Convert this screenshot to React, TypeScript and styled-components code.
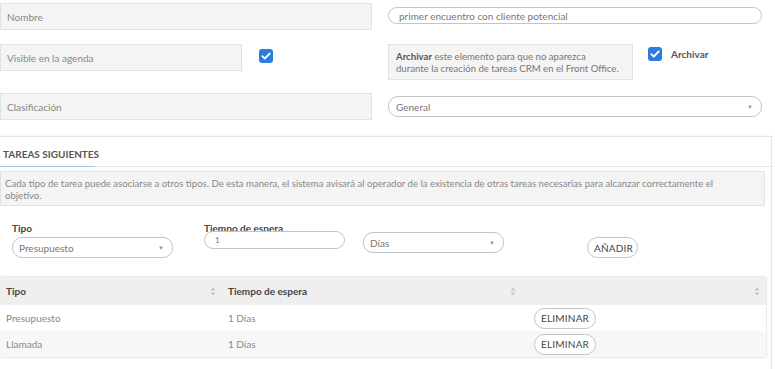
import styled, { createGlobalStyle } from "styled-components";

const GlobalStyle = createGlobalStyle`
    body {
        margin: 0;
        background: #ffffff;
        font-family: Lato, "Open Sans", sans-serif;
        color: #777777;
        font-size: 10px;
    }
    * { box-sizing: border-box; }
`

const Page = styled.div`
    width: 775px;
    height: 369px;
    overflow: hidden;
    padding-top: 3px;
`

const FormGrid = styled.div`
    display: grid;
    grid-template-columns: 372px 374px;
    column-gap: 16px;
`

const Cell = styled.div<{ $h: number }>`
    height: ${p => p.$h}px;
    display: flex;
    align-items: flex-start;
`

const LabelBox = styled.div<{ $w?: number }>`
    width: ${p => p.$w ? `${p.$w}px` : "100%"};
    height: 27px;
    background: #f4f4f4;
    border: 1px solid #e2e2e2;
    padding-left: 6px;
    display: flex;
    align-items: center;
    font-size: 10px;
    color: #888;
`

const Pill = styled.div<{ $w?: number; $h?: number; $mt?: number; $pl?: number; $fs?: number }>`
    width: ${p => p.$w ? `${p.$w}px` : "100%"};
    height: ${p => p.$h ?? 17}px;
    margin-top: ${p => p.$mt ?? 0}px;
    border: 1px solid #c4c4c4;
    border-radius: 10px;
    padding: 0 8px 0 ${p => p.$pl ?? 10}px;
    display: flex;
    align-items: center;
    justify-content: space-between;
    font-size: ${p => p.$fs ?? 10}px;
    color: #777;
    background: #fff;
`

const Caret = styled.span`
    font-size: 6px;
    color: #999;
`

const Check = styled.span<{ $ml: number; $mt: number }>`
    width: 14px;
    height: 14px;
    margin-left: ${p => p.$ml}px;
    margin-top: ${p => p.$mt}px;
    border-radius: 3px;
    background: #2b7de0;
    display: inline-flex;
    align-items: center;
    justify-content: center;
    flex-shrink: 0;
`

const InfoBox = styled.div`
    width: 245px;
    height: 36px;
    background: #f4f4f4;
    border: 1px solid #e2e2e2;
    padding: 0 6px 4px 7px;
    font-size: 9.6px;
    line-height: 12px;
    color: #777;
    display: flex;
    align-items: flex-end;
    b { color: #555; }
`

const CheckLabel = styled.span`
    font-weight: 700;
    color: #555;
    margin-left: 9px;
    margin-top: 4px;
    font-size: 10px;
`

const Panel = styled.div`
    margin-top: 16px;
    width: 772px;
    height: 240px;
    border-top: 1px solid #e4e4e4;
    border-right: 1px solid #e4e4e4;
    box-shadow: 0 -1px 2px rgba(0,0,0,0.04);
`

const PanelHead = styled.div`
    height: 30px;
    border-bottom: 1px solid #e4e4e4;
    display: flex;
    align-items: flex-end;
`

const PanelTitle = styled.div`
    font-weight: 700;
    color: #555;
    font-size: 10px;
    white-space: nowrap;
    padding: 0 3px 6px 3px;
    width: 95px;
    border-bottom: 1px solid #9fc9ee;
    margin-bottom: -1px;
`

const Desc = styled.div`
    margin-top: 4px;
    width: 765px;
    height: 35px;
    background: #f4f4f4;
    border: 1px solid #e2e2e2;
    padding: 6px 4px;
    font-size: 9.6px;
    line-height: 12px;
    color: #888;
`

const AddRow = styled.div`
    display: flex;
    align-items: flex-start;
    height: 71px;
    padding-top: 17px;
`

const Field = styled.div<{ $w: number; $ml: number }>`
    width: ${p => p.$w}px;
    margin-left: ${p => p.$ml}px;
    display: flex;
    flex-direction: column;
`

const FieldLabel = styled.div<{ $mb: number }>`
    font-weight: 700;
    color: #444;
    font-size: 10px;
    line-height: 10px;
    margin-bottom: ${p => p.$mb}px;
`

const Button = styled.button<{ $mt?: number }>`
    font-family: Lato, "Open Sans", sans-serif;
    font-size: 10px;
    color: #444;
    background: #fff;
    border: 1px solid #c4c4c4;
    border-radius: 11px;
    padding: 0 6px;
    height: 21px;
    margin-top: ${p => p.$mt ?? 0}px;
    letter-spacing: 0.2px;
`

const Table = styled.div`
    width: 766px;
    box-shadow: 0 0 2px rgba(0,0,0,0.25);
`

const Row = styled.div<{ $bg: string; $h: number; $bold?: boolean }>`
    display: grid;
    grid-template-columns: 222px 300px 244px;
    height: ${p => p.$h}px;
    background: ${p => p.$bg};
    align-items: center;
    color: ${p => p.$bold ? "#444" : "#888"};
    font-weight: ${p => p.$bold ? 700 : 400};
    font-size: 10px;
`

const Col = styled.div<{ $pl: number }>`
    display: flex;
    align-items: center;
    justify-content: space-between;
    padding-left: ${p => p.$pl}px;
    padding-right: 6px;
`

const SortIcon = () => (
    <svg width="6" height="9" viewBox="0 0 6 9">
        <path d="M3 0.5 L5.5 3.5 H0.5 Z" fill="#c4c4c4" />
        <path d="M3 8.5 L5.5 5.5 H0.5 Z" fill="#c4c4c4" />
    </svg>
)

const CheckMark = () => (
    <svg width="10" height="8" viewBox="0 0 10 8">
        <path d="M1.3 4.2 L3.8 6.5 L8.7 1.5" stroke="#fff" strokeWidth="1.8" fill="none" strokeLinecap="round" strokeLinejoin="round" />
    </svg>
)

const tasks = [
    { tipo: "Presupuesto", tiempo: "1 Días", bg: "#ffffff" },
    { tipo: "Llamada", tiempo: "1 Días", bg: "#f7f7f7" },
];

const App = () => {
    return (
        <>
            <GlobalStyle />
            <Page>
                <FormGrid>
                    <Cell $h={41}><LabelBox>Nombre</LabelBox></Cell>
                    <Cell $h={41}>
                        <Pill $mt={4}>primer encuentro con cliente potencial</Pill>
                    </Cell>
                    <Cell $h={49}>
                        <LabelBox $w={242}>Visible en la agenda</LabelBox>
                        <Check $ml={17} $mt={5}><CheckMark /></Check>
                    </Cell>
                    <Cell $h={49}>
                        <InfoBox>
                            <span><b>Archivar</b> este elemento para que no aparezca<br />durante la creación de tareas CRM en el Front Office.</span>
                        </InfoBox>
                        <Check $ml={15} $mt={3}><CheckMark /></Check>
                        <CheckLabel>Archivar</CheckLabel>
                    </Cell>
                    <Cell $h={27}><LabelBox>Clasificación</LabelBox></Cell>
                    <Cell $h={27}>
                        <Pill $h={21} $mt={3} $pl={7}>General<Caret>▼</Caret></Pill>
                    </Cell>
                </FormGrid>

                <Panel>
                    <PanelHead><PanelTitle>TAREAS SIGUIENTES</PanelTitle></PanelHead>
                    <Desc>
                        Cada tipo de tarea puede asociarse a otros tipos. De esta manera, el sistema avisará al operador de la existencia de otras tareas necesarias para alcanzar correctamente el<br />objetivo.
                    </Desc>
                    <AddRow>
                        <Field $w={161} $ml={12}>
                            <FieldLabel $mb={4}>Tipo</FieldLabel>
                            <Pill $h={21} $pl={6}>Presupuesto<Caret>▼</Caret></Pill>
                        </Field>
                        <Field $w={141} $ml={31}>
                            <FieldLabel $mb={-2}>Tiempo de espera</FieldLabel>
                            <Pill $h={18} $fs={8}>1</Pill>
                        </Field>
                        <Field $w={141} $ml={18}>
                            <Pill $h={21} $mt={9} $pl={6}>Días<Caret>▼</Caret></Pill>
                        </Field>
                        <Field $w={51} $ml={83}>
                            <Button $mt={14}>AÑADIR</Button>
                        </Field>
                    </AddRow>
                    <Table>
                        <Row $bg="#efefef" $h={28} $bold>
                            <Col $pl={6}>Tipo<SortIcon /></Col>
                            <Col $pl={6}>Tiempo de espera<SortIcon /></Col>
                            <Col $pl={6}><span /><SortIcon /></Col>
                        </Row>
                        {tasks.map(t => (
                            <Row key={t.tipo} $bg={t.bg} $h={26}>
                                <Col $pl={6}>{t.tipo}</Col>
                                <Col $pl={6}>{t.tiempo}</Col>
                                <Col $pl={12}><Button>ELIMINAR</Button></Col>
                            </Row>
                        ))}
                    </Table>
                </Panel>
            </Page>
        </>
    )
}

export default App;
